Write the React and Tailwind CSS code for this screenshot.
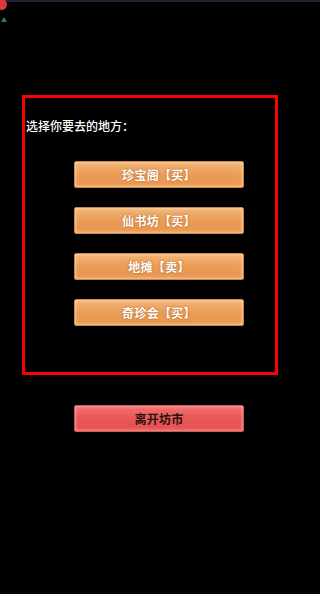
import React from "react";

const places = ["珍宝阁【买】", "仙书坊【买】", "地摊【卖】", "奇珍会【买】"];

const OrangeButton = ({ label }) => (
  <div className="w-[170px] h-[27px] flex items-center justify-center rounded-[2px] border border-[#c9864a] bg-gradient-to-b from-[#f2b575] via-[#ea9d58] to-[#e6964f] shadow-[inset_0_0_3px_1px_rgba(255,225,180,0.7)]">
    <span className="text-[12px] font-bold text-white tracking-wide [text-shadow:0_0_2px_rgba(150,70,10,0.8)]">
      {label}
    </span>
  </div>
);

export default function App() {
  return (
    <div
      className="relative w-[320px] h-[594px] bg-black overflow-hidden"
      style={{ fontFamily: '"Noto Sans CJK SC", "Noto Sans", sans-serif' }}
    >
      {/* top-left bits of the game HUD */}
      <div className="absolute left-0 top-0 w-full h-[2px] bg-[#2a1f33]" />
      <div className="absolute -left-[4px] -top-[1px] w-[11px] h-[11px] rounded-full bg-[#d93a3a]" />
      <div className="absolute left-[1px] top-[17px] w-0 h-0 border-l-[3px] border-r-[3px] border-b-[5px] border-l-transparent border-r-transparent border-b-[#1f8a4a]" />

      <div className="pt-[95px] pl-[22px]">
        <div className="w-[256px] h-[280px] border-[3px] border-[#ff0000]">
          <p className="pl-[1px] pt-[21px] text-[12px] leading-[14px] text-white font-medium">
            选择你要去的地方：
          </p>
          <div className="flex flex-col gap-[19px] pl-[49px] pt-[28px]">
            {places.map((p) => (
              <OrangeButton key={p} label={p} />
            ))}
          </div>
        </div>

        <div className="ml-[52px] mt-[30px] w-[170px] h-[27px] flex items-center justify-center rounded-[2px] border border-[#c95a5a] bg-gradient-to-b from-[#f27272] via-[#e85656] to-[#e65252] shadow-[inset_0_0_3px_1px_rgba(255,190,190,0.6)]">
          <span className="text-[12px] font-bold text-[#2a1212] tracking-wide">离开坊市</span>
        </div>
      </div>
    </div>
  );
}
